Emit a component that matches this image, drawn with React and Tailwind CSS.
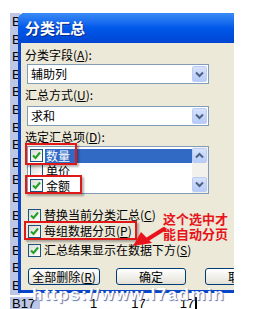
import React from 'react';

const cjk = "font-['Noto_Sans_CJK_SC','Liberation_Sans',sans-serif]";

function Check({ checked = true }) {
  return (
    <span className="flex h-[13px] w-[13px] shrink-0 items-center justify-center border border-[#1c5180] bg-linear-to-br from-[#dcdcd5] to-white">
      {checked && (
        <svg width="11" height="11" viewBox="0 0 11 11">
          <path d="M2 5.5 L4.5 8 L9 2.5" fill="none" stroke="#21a121" strokeWidth="2" />
        </svg>
      )}
    </span>
  );
}

function Chevron({ up = false }) {
  return (
    <svg width="11" height="9" viewBox="0 0 11 9">
      <path d={up ? 'M2 6.5 L5.5 3 L9 6.5' : 'M2 2.5 L5.5 6 L9 2.5'} fill="none" stroke="#4d6185" strokeWidth="2" />
    </svg>
  );
}

function ArrowBtn({ up, className = '' }) {
  return (
    <div className={`flex h-[15px] w-[15px] items-center justify-center rounded-[2px] border border-[#b9cdf7] bg-linear-to-b from-[#d6e2fc] to-[#b7cbf7] ${className}`}>
      <Chevron up={up} />
    </div>
  );
}

function Select({ value }) {
  return (
    <div className="ml-[6px] flex h-[20px] w-[182px] items-center justify-between border border-[#7f9db9] bg-white pl-[3px] pr-[1px]">
      <span className="text-[12px] leading-[14px]">{value}</span>
      <div className="flex h-[16px] w-[15px] items-center justify-center rounded-[2px] border border-[#b9cdf7] bg-linear-to-b from-[#d6e2fc] to-[#b7cbf7]">
        <Chevron />
      </div>
    </div>
  );
}

function Label({ text, k }) {
  return (
    <div className="pl-[4px] text-[12px] leading-[14px]">
      {text}(<span className="underline">{k}</span>):
    </div>
  );
}

function Option({ text, k, className = '' }) {
  return (
    <div className={`ml-[7px] flex h-[16px] items-center gap-[3px] ${className}`}>
      <Check />
      <span className="text-[12px] leading-[14px]">
        {text}(<span className="underline">{k}</span>)
      </span>
    </div>
  );
}

function XpButton({ children, className = '' }) {
  return (
    <div className={`flex h-[17px] shrink-0 items-center justify-center rounded-[3px] border border-[#003c74] bg-linear-to-b from-white to-[#e3e1d6] text-[12px] leading-[14px] ${className}`}>
      {children}
    </div>
  );
}

export default function App() {
  const rows = Array.from({ length: 16 });
  return (
    <div className={`relative h-[309px] w-[265px] overflow-hidden bg-white text-black ${cjk}`}>
      {/* sheet behind the dialog */}
      <div className="flex w-[234px] flex-col pt-[13px] font-['Liberation_Sans',sans-serif]">
        {rows.map((_, i) => (
          <div key={i} className="flex h-[17.6px]">
            <div className="ml-[10px] w-[10px] bg-[#bcc6e6] pl-[2px] text-[13px] leading-[17px]">B</div>
          </div>
        ))}
        <div className="flex h-[16px] items-end text-[13px] leading-[14px]">
          <div className="ml-[10px] w-[30px] bg-[#bcc6e6] pl-[2px]">B17</div>
          <span className="ml-[50px]">1</span>
          <span className="ml-[34px]">17</span>
          <span className="ml-[34px]">17</span>
          <span className="ml-[1px] h-[14px] w-[2px] bg-black" />
        </div>
      </div>

      {/* dialog */}
      <div className="absolute left-[18px] top-[13px] flex h-[280px] w-[216px] flex-col overflow-hidden rounded-tl-[7px] bg-[#0845c8]">
        <div className="flex h-[30px] shrink-0 items-center bg-linear-to-b from-[#3a8af5] via-[#0058ea] to-[#0046d2] pl-[7px]">
          <span className="text-[15px] font-bold leading-[18px] text-white [text-shadow:1px_1px_0_#0a2a8a]">分类汇总</span>
        </div>
        <div className="mb-[3px] ml-[3px] flex flex-1 flex-col bg-[#ece9d8] pt-[5px]">
          <Label text="分类字段" k="A" />
          <div className="mt-[2px]"><Select value="辅助列" /></div>
          <div className="mt-[4px]"><Label text="汇总方式" k="U" /></div>
          <div className="mt-[4px]"><Select value="求和" /></div>
          <div className="mt-[4px]"><Label text="选定汇总项" k="D" /></div>

          <div className="ml-[6px] mt-[2px] flex h-[48px] w-[182px] border border-[#7f9db9] bg-white">
            <div className="flex flex-1 flex-col pt-[1px]">
              <div className="flex h-[15px] items-center pl-[2px]">
                <Check />
                <span className="ml-[2px] flex h-[14px] flex-1 items-center bg-[#316ac5] pl-[1px] text-[12px] leading-[14px] text-white">数量</span>
              </div>
              <div className="flex h-[15px] items-center pl-[2px]">
                <Check checked={false} />
                <span className="ml-[3px] text-[12px] leading-[14px]">单价</span>
              </div>
              <div className="flex h-[15px] items-center pl-[2px]">
                <Check />
                <span className="ml-[3px] text-[12px] leading-[14px]">金额</span>
              </div>
            </div>
            <div className="flex w-[16px] flex-col justify-between bg-[#f3f1ec] py-[1px]">
              <ArrowBtn up />
              <ArrowBtn />
            </div>
          </div>

          <Option text="替换当前分类汇总" k="C" className="mt-[13px]" />
          <Option text="每组数据分页" k="P" />
          <Option text="汇总结果显示在数据下方" k="S" className="mt-[3px]" />

          <div className="mt-[10px] flex">
            <XpButton className="ml-[7px] w-[72px]">全部删除(<span className="underline">R</span>)</XpButton>
            <XpButton className="ml-[16px] w-[70px]">确定</XpButton>
            <XpButton className="ml-[19px] w-[70px]">取消</XpButton>
          </div>
        </div>
      </div>

      {/* red annotation boxes */}
      <div className="absolute left-[25px] top-[143px] h-[22px] w-[52px] border-2 border-[#e01818] shadow-[2px_2px_2px_rgba(0,0,0,0.3)]" />
      <div className="absolute left-[25px] top-[175px] h-[19px] w-[57px] border-2 border-[#e01818] shadow-[2px_2px_2px_rgba(0,0,0,0.3)]" />
      <div className="absolute left-[24px] top-[221px] h-[19px] w-[113px] border-2 border-[#e01818] shadow-[2px_2px_2px_rgba(0,0,0,0.3)]" />

      <div className="absolute left-[163px] top-[211px] text-[13px] font-bold leading-[15px] text-[#e8131b]">
        <div>这个选中才</div>
        <div>能自动分页</div>
      </div>

      <svg className="absolute left-[128px] top-[224px]" width="44" height="30" viewBox="0 0 44 30">
        <path d="M36 5 L20 15" stroke="#e8131b" strokeWidth="4" strokeLinecap="round" />
        <path d="M5 22 L13 8 L24 19 Z" fill="#e8131b" />
      </svg>

      {/* watermark */}
      <div className="absolute left-[32px] top-[286px] whitespace-nowrap font-['Liberation_Sans',sans-serif] text-[17px] font-bold leading-[18px] tracking-[1.5px] text-white [text-shadow:1px_1px_1px_#5a6fa8]">
        https://www.l7admin
      </div>
    </div>
  );
}
